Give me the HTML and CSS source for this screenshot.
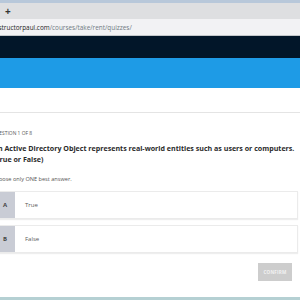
FILE: index.html
```html
<!DOCTYPE html>
<html>
<head>
<meta charset="utf-8">
<link rel="stylesheet" href="styles.css">
</head>
<body>
<div class="page">
  <div class="topline"></div>
  <div class="tabs"><span class="plus">+</span></div>
  <div class="addr"><span class="dom">instructorpaul.com</span><span class="path">/courses/take/rent/quizzes/</span></div>
  <div class="nav"></div>
  <div class="hero"></div>
  <div class="sub"></div>
  <div class="content">
    <div class="qnum">QUESTION 1 OF 8</div>
    <div class="qtext">An Active Directory Object represents real-world entities such as users or computers. (True or False)</div>
    <div class="hint">Choose only ONE best answer.</div>
    <div class="opt"><div class="letter">A</div><div class="ans">True</div></div>
    <div class="opt"><div class="letter">B</div><div class="ans">False</div></div>
    <div class="actions"><div class="btn">CONFIRM</div></div>
  </div>
  <div class="bottom"></div>
</div>
</body>
</html>
```
FILE: styles.css
```css
html, body { margin: 0; padding: 0; background: #fff; }
body { width: 300px; height: 300px; overflow: hidden; font-family: "Open Sans", "DejaVu Sans", sans-serif; }
.page { display: flex; flex-direction: column; height: 300px; }
.topline { height: 3px; background: #b8c8da; }
.tabs { height: 16px; background: #dedfe1; display: flex; align-items: center; }
.plus { margin-left: 5px; font-size: 10px; line-height: 16px; color: #333; font-weight: 700; }
.addr { height: 16px; background: #f2f2f4; border-bottom: 1px solid #c3c7ca; display: flex; align-items: center; font-size: 6.4px; white-space: nowrap; margin-left: -7px; }
.dom { color: #222; }
.path { color: #6f7a82; }
.nav { height: 22px; background: #021629; }
.hero { height: 30px; background: #1e9be6; }
.sub { height: 24px; border-bottom: 1px solid #e4e4e4; }
.content { margin-left: -7px; margin-right: 2px; padding-top: 17px; flex: 1; display: flex; flex-direction: column; }
.qnum { font-size: 4.9px; color: #555; line-height: 6px; white-space: nowrap; margin-left: -1px; }
.qtext { font-weight: 700; font-size: 7.1px; line-height: 11px; color: #2b2b2b; margin-top: 7px; margin-right: -4px; }
.hint { font-size: 5.6px; color: #555; margin-top: 10px; line-height: 8px; white-space: nowrap; margin-left: -1px; }
.opt { display: flex; height: 26px; border: 1px solid #ebebeb; border-left: none; box-shadow: 0 1px 1px #eee; }
.opt + .opt { margin-top: 6px; }
.hint + .opt { margin-top: 8px; }
.letter { width: 22px; background: #c9ccd5; color: #444; font-size: 6px; font-weight: 700; display: flex; align-items: center; justify-content: center; padding-left: 2px; box-sizing: border-box; }
.ans { flex: 1; display: flex; align-items: center; padding-left: 10px; font-size: 6px; color: #5a5a5a; }
.actions { display: flex; justify-content: flex-end; margin-top: 10px; padding-right: 6px; }
.btn { width: 34px; height: 18px; background: #cdcdcd; color: #f2f2f2; font-size: 4.6px; font-weight: 700; display: flex; align-items: center; justify-content: center; letter-spacing: 0.2px; }
.bottom { height: 3px; background: #b5d0d3; }
```
